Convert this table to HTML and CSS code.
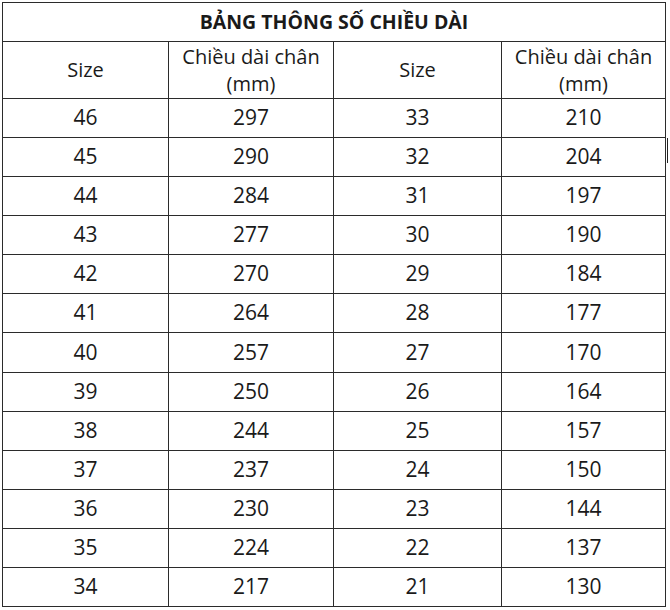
FILE: index.html
```html
<!DOCTYPE html>
<html lang="vi">
<head>
<meta charset="utf-8">
<title>Bảng thông số chiều dài</title>
<link rel="stylesheet" href="styles.css">
</head>
<body>
<div class="page">
  <div class="sheet">
    <div class="cell title">BẢNG THÔNG SỐ CHIỀU DÀI</div>
    <div class="cell head">Size</div>
    <div class="cell head">Chiều dài chân<br>(mm)</div>
    <div class="cell head">Size</div>
    <div class="cell head">Chiều dài chân<br>(mm)</div>

    <div class="cell">46</div><div class="cell">297</div><div class="cell">33</div><div class="cell">210</div>
    <div class="cell">45</div><div class="cell">290</div><div class="cell">32</div><div class="cell">204</div>
    <div class="cell">44</div><div class="cell">284</div><div class="cell">31</div><div class="cell">197</div>
    <div class="cell">43</div><div class="cell">277</div><div class="cell">30</div><div class="cell">190</div>
    <div class="cell">42</div><div class="cell">270</div><div class="cell">29</div><div class="cell">184</div>
    <div class="cell">41</div><div class="cell">264</div><div class="cell">28</div><div class="cell">177</div>
    <div class="cell">40</div><div class="cell">257</div><div class="cell">27</div><div class="cell">170</div>
    <div class="cell">39</div><div class="cell">250</div><div class="cell">26</div><div class="cell">164</div>
    <div class="cell">38</div><div class="cell">244</div><div class="cell">25</div><div class="cell">157</div>
    <div class="cell">37</div><div class="cell">237</div><div class="cell">24</div><div class="cell">150</div>
    <div class="cell">36</div><div class="cell">230</div><div class="cell">23</div><div class="cell">144</div>
    <div class="cell">35</div><div class="cell">224</div><div class="cell">22</div><div class="cell">137</div>
    <div class="cell">34</div><div class="cell">217</div><div class="cell">21</div><div class="cell">130</div>
  </div>
  <span class="cursor-mark"></span>
</div>
</body>
</html>
```

FILE: styles.css
```css
html, body {
  margin: 0;
  padding: 0;
  background: #ffffff;
}

.page {
  position: relative;
  width: 670px;
  height: 610px;
  padding: 2px 0 0 2px;
  box-sizing: border-box;
}

.sheet {
  display: grid;
  grid-template-columns: 165px 164px 167px 163px;
  grid-template-rows: 38px 56px repeat(13, 38.08px);
  gap: 1px;
  padding: 1px;
  width: 664px;
  box-sizing: border-box;
  background: #2b2b2b;
  font-family: "Open Sans", "Liberation Sans", sans-serif;
  font-size: 21px;
  color: #1a1a1a;
}

.cell {
  background: #ffffff;
  display: flex;
  align-items: center;
  justify-content: center;
  text-align: center;
  line-height: 27px;
  padding-bottom: 1px;
  box-sizing: border-box;
}

.title {
  grid-column: 1 / -1;
  font-weight: 700;
  font-size: 19.5px;
  padding-bottom: 2px;
}

.head {
  font-size: 20px;
  line-height: 27px;
  padding-bottom: 1px;
}

.cursor-mark {
  position: absolute;
  left: 667px;
  top: 138px;
  width: 1px;
  height: 25px;
  background: #222222;
}
```
